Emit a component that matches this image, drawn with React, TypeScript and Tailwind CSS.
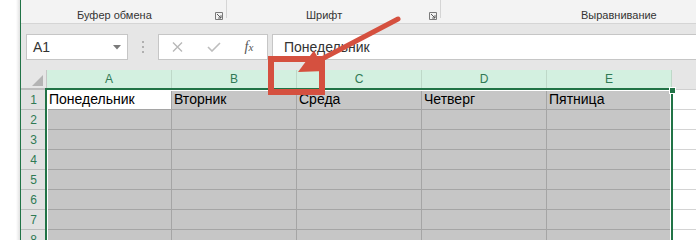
import React from "react";

const cols = ["A", "B", "C", "D", "E"];
const row1 = ["Понедельник", "Вторник", "Среда", "Четверг", "Пятница"];
const rows = [1, 2, 3, 4, 5, 6, 7, 8];

function Launcher() {
  return (
    <svg width="8" height="8" viewBox="0 0 8 8" className="shrink-0">
      <path d="M0.5 7.5V0.5H7.5V7.5Z" fill="none" stroke="#7a7a7a" strokeWidth="1" />
      <path d="M2 2L6 6M6 3.2V6H3.2" fill="none" stroke="#5a5a5a" strokeWidth="1" />
    </svg>
  );
}

export default function App() {
  return (
    <div
      className="relative w-[696px] h-[240px] overflow-hidden bg-white flex"
      style={{ fontFamily: '"Liberation Sans", Arial, sans-serif' }}
    >
      {/* left white strip with slight shadow */}
      <div className="w-[20px] shrink-0 bg-white flex justify-end">
        <div className="w-[4px] h-full bg-gradient-to-r from-white to-[#e2e2e2]" />
      </div>

      <div className="flex-1 min-w-0 flex flex-col border-l border-[#217346]">
        {/* Ribbon group labels */}
        <div className="h-[24px] shrink-0 bg-[#f3f3f3] border-b border-[#d5d5d5] flex text-[11px] text-[#333]">
          <div className="w-[205px] shrink-0 flex items-start pt-[8px] pl-[56px] pr-[3px]">
            <span className="leading-[14px]">Буфер обмена</span>
            <div className="ml-auto mt-[4px]">
              <Launcher />
            </div>
          </div>
          <div className="w-px h-[18px] bg-[#d5d5d5] shrink-0" />
          <div className="w-[213px] shrink-0 flex items-start pt-[8px] pl-[79px] pr-[3px]">
            <span className="leading-[14px]">Шрифт</span>
            <div className="ml-auto mt-[4px]">
              <Launcher />
            </div>
          </div>
          <div className="w-px h-[18px] bg-[#d5d5d5] shrink-0" />
          <div className="flex-1 flex items-start pt-[8px] pl-[140px]">
            <span className="leading-[14px] whitespace-nowrap">Выравнивание</span>
          </div>
        </div>

        {/* Formula bar */}
        <div className="h-[46px] shrink-0 bg-[#e6e6e6] flex items-start pt-[10px] overflow-hidden">
          <div className="ml-[5px] w-[102px] h-[26px] shrink-0 bg-white border border-[#c6c6c6] flex items-center pl-[6px] pr-[6px]">
            <span className="text-[14px] text-[#333] leading-none">A1</span>
            <svg width="8" height="5" viewBox="0 0 8 5" className="ml-auto mt-[1px]">
              <path d="M0 0H8L4 4.5Z" fill="#7a7a7a" />
            </svg>
          </div>
          <div className="w-[30px] h-[26px] shrink-0 flex flex-col items-center justify-center gap-[3px]">
            <div className="w-[2px] h-[2px] bg-[#b0b0b0]" />
            <div className="w-[2px] h-[2px] bg-[#b0b0b0]" />
            <div className="w-[2px] h-[2px] bg-[#b0b0b0]" />
          </div>
          <div className="w-[110px] h-[26px] shrink-0 bg-white border border-[#c6c6c6] flex items-center">
            <div className="w-[37px] flex justify-center">
              <svg width="11" height="10" viewBox="0 0 11 10">
                <path d="M1 0.5L10 9.5M10 0.5L1 9.5" stroke="#b8b8b8" strokeWidth="1.4" />
              </svg>
            </div>
            <div className="w-[36px] flex justify-center">
              <svg width="14" height="10" viewBox="0 0 14 10">
                <path d="M1 5L5 9L13 1" fill="none" stroke="#bdbdbd" strokeWidth="1.6" />
              </svg>
            </div>
            <div className="w-[34px] flex justify-center">
              <span
                className="italic text-[#555] text-[14px] leading-none"
                style={{ fontFamily: '"Liberation Serif", "Times New Roman", serif' }}
              >
                f<span className="text-[11px]">x</span>
              </span>
            </div>
          </div>
          <div className="ml-[4px] w-[450px] h-[26px] shrink-0 bg-white border border-[#c6c6c6] flex items-center pl-[11px]">
            <span className="text-[14px] text-[#333] leading-none">Понедельник</span>
          </div>
        </div>

        {/* Column headers */}
        <div className="h-[20px] shrink-0 flex text-[12px] text-[#2f7a54]">
          <div className="w-[26px] shrink-0 bg-[#e6e6e6] border-r border-[#c6c6c6] border-b-2 border-b-[#bdbdbd] flex items-end justify-end pr-[3px] pb-[2px]">
            <svg width="11" height="11" viewBox="0 0 11 11">
              <path d="M11 0V11H0Z" fill="#b4b4b4" />
            </svg>
          </div>
          {cols.map((c) => (
            <div
              key={c}
              className="w-[125px] shrink-0 bg-[#d3f0e0] border-r border-[#bed8c8] border-b-2 border-b-[#217346] flex items-center justify-center"
            >
              {c}
            </div>
          ))}
          <div className="flex-1 bg-[#e6e6e6] border-b border-[#d0d0d0]" />
        </div>

        {/* Rows */}
        {rows.map((r) => (
          <div key={r} className="h-[20px] shrink-0 flex">
            <div className="w-[26px] shrink-0 bg-[#e1e1e1] border-r border-[#c6c6c6] border-b border-b-[#bdbdbd] flex items-center justify-center text-[12px] text-[#2f7a54]">
              {r}
            </div>
            {cols.map((c, i) => (
              <div
                key={c}
                className={
                  "w-[125px] shrink-0 border-r border-b border-[#a5a5a5] flex items-center pl-[2px] text-[14px] text-black whitespace-nowrap overflow-hidden " +
                  (r === 1 && i === 0 ? "bg-white" : "bg-[#c6c6c6]")
                }
              >
                {r === 1 ? row1[i] : ""}
              </div>
            ))}
            <div className="flex-1 bg-white border-b border-[#d4d4d4]" />
          </div>
        ))}
      </div>

      {/* Selection border */}
      <div className="absolute left-[45px] top-[88px] w-[628px] h-[200px] border-2 border-[#217346]">
        <div className="absolute inset-0 border border-white" />
      </div>
      <div className="absolute left-[669px] top-[87px] w-[7px] h-[7px] bg-[#217346] border border-white" />

      {/* Red annotation */}
      <svg className="absolute inset-0 pointer-events-none" width="696" height="240" viewBox="0 0 696 240">
        <rect x="271" y="59" width="51" height="33" fill="none" stroke="#d5503f" strokeWidth="6" />
        <line x1="398" y1="19" x2="318" y2="61" stroke="#d5503f" strokeWidth="5" strokeLinecap="round" />
        <polygon points="298,72 314,50.5 325,71" fill="#d5503f" />
      </svg>
    </div>
  );
}
